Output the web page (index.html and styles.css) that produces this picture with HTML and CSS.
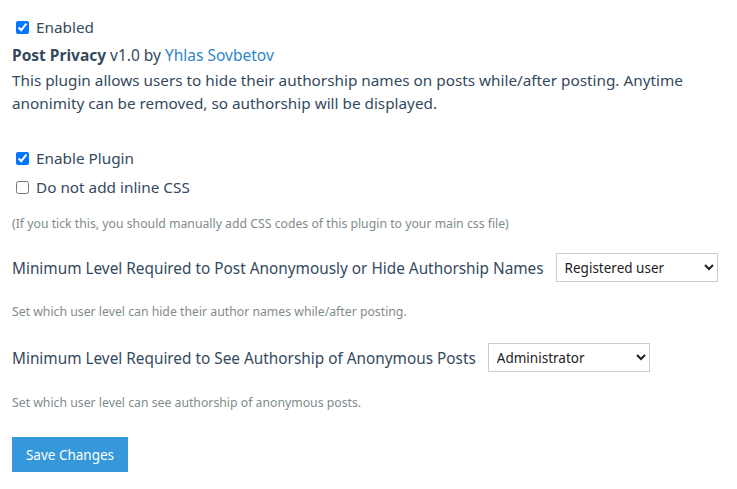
FILE: index.html
```html
<!DOCTYPE html>
<html>
<head>
<meta charset="utf-8">
<link rel="stylesheet" href="styles.css">
</head>
<body>
<div class="page">
  <label class="check enabled"><input type="checkbox" checked> Enabled</label>
  <div class="title"><b>Post Privacy</b> v1.0 by <a href="#">Yhlas Sovbetov</a></div>
  <p class="desc">This plugin allows users to hide their authorship names on posts while/after posting. Anytime anonimity can be removed, so authorship will be displayed.</p>

  <label class="check opt first"><input type="checkbox" checked> Enable Plugin</label>
  <label class="check opt"><input type="checkbox"> Do not add inline CSS</label>
  <p class="note">(If you tick this, you should manually add CSS codes of this plugin to your main css file)</p>

  <div class="field">
    <span class="label">Minimum Level Required to Post Anonymously or Hide Authorship Names</span>
    <select class="sel"><option>Registered user</option></select>
  </div>
  <p class="help">Set which user level can hide their author names while/after posting.</p>

  <div class="field second">
    <span class="label">Minimum Level Required to See Authorship of Anonymous Posts</span>
    <select class="sel"><option>Administrator</option></select>
  </div>
  <p class="help last">Set which user level can see authorship of anonymous posts.</p>

  <button class="save">Save Changes</button>
</div>
</body>
</html>
```
FILE: styles.css
```css
html, body {
  margin: 0;
  padding: 0;
  background: #fff;
}
body {
  font-family: "Noto Sans", "Open Sans", sans-serif;
  color: #34495e;
  font-size: 15.3px;
}
.page {
  padding: 16px 12px 12px 12px;
}
.check {
  display: flex;
  align-items: center;
  height: 22px;
  line-height: 22px;
}
.check input {
  margin: 0 7px 0 4px;
  width: 13px;
  height: 13px;
  flex: none;
}
.title {
  margin-top: 6px;
  line-height: 23px;
  font-size: 15.5px;
}
.title b {
  font-weight: 700;
}
.title a {
  color: #2f86c7;
  text-decoration: none;
}
.desc {
  margin: 2px 0 0;
  line-height: 23px;
}
.opt.first {
  margin-top: 32px;
}
.opt {
  margin-bottom: 7px;
}
.note {
  margin: 18px 0 0;
  font-size: 12.25px;
  color: #7f8c8d;
  line-height: 16px;
}
.field {
  display: flex;
  align-items: center;
  gap: 12px;
  margin-top: 21px;
  font-size: 15.35px;
  white-space: nowrap;
}
.field.second {
  margin-top: 23px;
}
.sel {
  flex: none;
  width: 162px;
  height: 29px;
  border: 1px solid #ccc;
  border-radius: 0;
  background: #fff;
  font-family: inherit;
  font-size: 13.5px;
  color: #222;
  padding: 0 4px;
}
.help {
  margin: 22px 0 0;
  font-size: 12.25px;
  color: #7f8c8d;
  line-height: 16px;
}
.help.last {
  margin-top: 23px;
}
.save {
  display: block;
  margin-top: 26px;
  background: #3498db;
  color: #fff;
  border: 0;
  border-radius: 0;
  width: 116px;
  height: 35px;
  font-family: inherit;
  font-size: 13.5px;
  padding: 0;
}
```
